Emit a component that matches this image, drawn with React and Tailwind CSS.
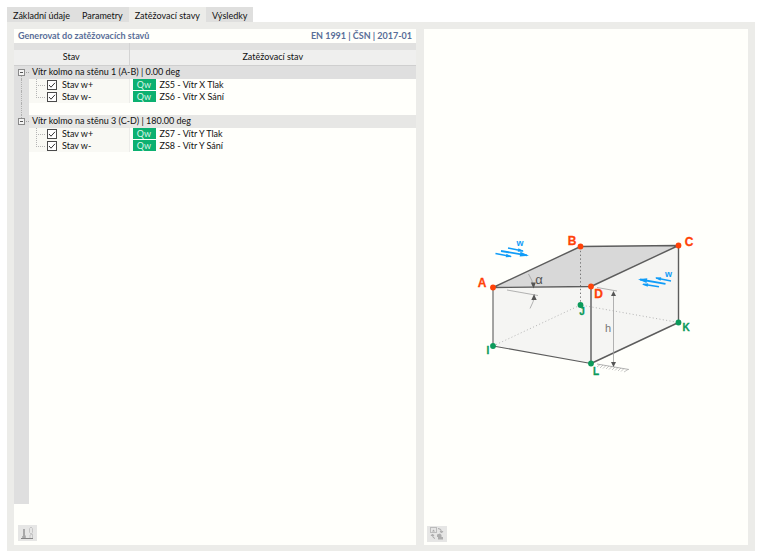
import React, { useState } from 'react';
import clsx from 'clsx';

const TABS = ['Základní údaje', 'Parametry', 'Zatěžovací stavy', 'Výsledky'];

const GROUPS = [
  {
    id: 'ab',
    title: 'Vítr kolmo na stěnu 1 (A-B) | 0.00 deg',
    rows: [
      { id: 'zs5', state: 'Stav w+', loadCase: 'ZS5 - Vítr X Tlak' },
      { id: 'zs6', state: 'Stav w-', loadCase: 'ZS6 - Vítr X Sání' },
    ],
  },
  {
    id: 'cd',
    title: 'Vítr kolmo na stěnu 3 (C-D) | 180.00 deg',
    rows: [
      { id: 'zs7', state: 'Stav w+', loadCase: 'ZS7 - Vítr Y Tlak' },
      { id: 'zs8', state: 'Stav w-', loadCase: 'ZS8 - Vítr Y Sání' },
    ],
  },
];

// --- Tabs ---
const TabBar = ({ active, onSelect }) => (
  <div role="tablist" className="flex h-[15px] items-stretch">
    {TABS.map((tab) => (
      <button
        key={tab}
        type="button"
        role="tab"
        aria-selected={tab === active}
        onClick={() => onSelect(tab)}
        className={clsx(
          'px-[6px] whitespace-nowrap leading-[17px]',
          tab === active ? 'bg-[#ecece9]' : 'bg-[#dfdfde]'
        )}
      >
        {tab}
      </button>
    ))}
  </div>
);

// --- Tree parts ---
const CheckBox = ({ id, checked, onChange }) => (
  <span className="relative block h-[10px] w-[10px]">
    <input
      id={id}
      type="checkbox"
      checked={checked}
      onChange={onChange}
      className="block h-[10px] w-[10px] appearance-none border border-[#4a4a4a] bg-white"
    />
    {checked && (
      <svg viewBox="0 0 10 10" className="pointer-events-none absolute inset-0 h-[10px] w-[10px]">
        <path d="M2 5 L4 7.2 L8 2.8" fill="none" stroke="#333" strokeWidth="1" />
      </svg>
    )}
  </span>
);

const Gutter = ({ line }) => (
  <td className="bg-[#dfdfdf] p-0">
    {line && <div className="ml-[7px] h-3 border-l border-dotted border-[#b0b0b0]" />}
  </td>
);

const LoadRow = ({ row, last, line, checked, onToggle }) => (
  <tr className="h-3">
    <Gutter line={line} />
    <td className="border-r border-[#ecece9] bg-[#f9f9f4] p-0">
      <div className="flex h-3 items-center">
        <svg viewBox="0 0 18 12" className="h-3 w-[18px]" fill="none" stroke="#b5b5b5" strokeDasharray="1 1">
          <path d={last ? 'M7.5 0V6.5' : 'M7.5 0V12'} />
          <path d="M7 6.5H17" />
        </svg>
        <CheckBox id={row.id} checked={checked} onChange={onToggle} />
        <label htmlFor={row.id} className="ml-[5px]">{row.state}</label>
      </div>
    </td>
    <td className="p-0">
      <div className="flex h-3 items-center pl-[3px]">
        <span className="flex h-[11px] w-[23px] items-center justify-center bg-[#0cb070] text-[#d9f5e8]">Qw</span>
        <span className="ml-1">{row.loadCase}</span>
      </div>
    </td>
  </tr>
);

const GroupHeader = ({ title, first, open, onToggle }) => (
  <tr className="h-[13px]">
    <td className="bg-[#dfdfdf] p-0">
      <button type="button" aria-label={title} aria-expanded={open} onClick={onToggle} className="ml-1 block h-[13px] w-[11px]">
        <svg viewBox="0 0 11 13" className="h-[13px] w-[11px]" fill="none">
          <path d={first ? 'M3.5 10V13' : 'M3.5 0V3'} stroke="#b0b0b0" strokeDasharray="1 1" />
          <rect x="0.5" y="3.5" width="6" height="6" fill="#f4f4f4" stroke="#8a8a8a" />
          <path d="M2 6.5H5" stroke="#555" />
          {!open && <path d="M3.5 5V8" stroke="#555" />}
          <path d="M8 6.5H11" stroke="#a5a5a5" strokeDasharray="1 1" />
        </svg>
      </button>
    </td>
    <td colSpan={2} className={clsx('p-0 pl-[3px]', first ? 'bg-[#dfdfdf]' : 'bg-[#e7e7e5]')}>{title}</td>
  </tr>
);

const LoadTable = () => {
  const [checked, setChecked] = useState({ zs5: true, zs6: true, zs7: true, zs8: true });
  const [open, setOpen] = useState({ ab: true, cd: true });

  return (
    <table className="w-full table-fixed border-collapse leading-3">
      <colgroup>
        <col className="w-[15px]" />
        <col className="w-[100px]" />
        <col />
      </colgroup>
      <thead>
        <tr className="h-[7px] bg-[#e1e1e0]">
          <td colSpan={2} className="border-r border-[#d3d3d3] p-0" />
          <td className="p-0" />
        </tr>
        <tr className="h-[15px] border-b border-[#cfcfcf] bg-[#efefee]">
          <th scope="col" colSpan={2} className="border-r border-[#d3d3d3] p-0 font-normal">Stav</th>
          <th scope="col" className="p-0 font-normal">Zatěžovací stav</th>
        </tr>
      </thead>
      <tbody>
        {GROUPS.map((group, i) => (
          <React.Fragment key={group.id}>
            <GroupHeader
              title={group.title}
              first={i === 0}
              open={open[group.id]}
              onToggle={() => setOpen({ ...open, [group.id]: !open[group.id] })}
            />
            {open[group.id] && group.rows.map((row, n) => (
              <LoadRow
                key={row.id}
                row={row}
                last={n === group.rows.length - 1}
                line={i < GROUPS.length - 1}
                checked={checked[row.id]}
                onToggle={() => setChecked({ ...checked, [row.id]: !checked[row.id] })}
              />
            ))}
            {i < GROUPS.length - 1 && (
              <tr className="h-3">
                <Gutter line />
                <td colSpan={2} className="p-0" />
              </tr>
            )}
          </React.Fragment>
        ))}
      </tbody>
    </table>
  );
};

// --- Building sketch ---
const TOP = [['A', 493, 287.5, 482, 287], ['B', 580.5, 246.5, 572, 245], ['C', 678.5, 245.5, 689, 246], ['D', 591, 286.5, 598.5, 298]];
const BASE = [['I', 493, 346, 488, 354], ['J', 580.5, 305, 582, 315], ['K', 678.5, 322.5, 686, 331], ['L', 591, 363.5, 596, 375]];

const Arrow = ({ x1, y1, x2, y2, bold }) => {
  const angle = (Math.atan2(y2 - y1, x2 - x1) * 180) / Math.PI;
  return (
    <g stroke="#109cf8" fill="#109cf8">
      <line x1={x1} y1={y1} x2={x2} y2={y2} strokeWidth={bold ? 1.8 : 1.5} />
      <path
        d={bold ? 'M2 0L-7 -2.4V2.4Z' : 'M1 0L-5 -1.8V1.8Z'}
        stroke="none"
        transform={`translate(${x2} ${y2}) rotate(${angle})`}
      />
    </g>
  );
};

const BuildingSketch = () => (
  <svg viewBox="471 227 230 160" className="h-[160px] w-[230px] font-['Liberation_Sans',sans-serif]" role="img" aria-label="h, α, w">
    <path d="M493 287.5L580.5 246.5L678.5 245.5V322.5L591 363.5L493 346Z" fill="#f5f5f3" />
    <path d="M493 287.5L580.5 246.5L678.5 245.5L591 286.5Z" fill="#d8d8d8" />
    <g fill="none" strokeDasharray="1 2.4">
      <path d="M580.5 247V305" stroke="#777" strokeDasharray="1.4 2.4" />
      <path d="M493 346L580.5 305L678.5 322.5" stroke="#b4b4b4" />
    </g>
    <g fill="none" stroke="#5c5c5c" strokeWidth="1.4" strokeLinejoin="round">
      <path d="M493 287.5L580.5 246.5L678.5 245.5L591 286.5Z" />
      <path d="M591 286.5V363.5L678.5 322.5V245.5" />
      <path d="M493 287.5V346L591 363.5" strokeWidth="1.1" />
    </g>
    {/* roof angle */}
    <g fill="none" stroke="#a0a0a0" strokeWidth="0.8">
      <path d="M507 290L538 295.5" />
      <path d="M528.5 274Q532.5 280 533.5 287" />
      <path d="M534.5 294Q534 302 530 308.5" />
    </g>
    <path d="M530.8 282.5H535.8L533.6 288.5Z M531.3 300H536.7L534 294.2Z" fill="#555" />
    <text x="539" y="284" textAnchor="middle" fontSize="13" fill="#555">α</text>
    {/* height */}
    <g fill="none" stroke="#a0a0a0" strokeWidth="0.8">
      <path d="M597 287.5L617 291" />
      <path d="M613.5 292V365" />
      <path d="M597 364L629 369.5" />
      <path
        d="M600 364.5L597 367M603 365L600 368M606 365.5L603 368.5M609 366L606 369M612 366.5L609 369.5M615 367L612 370M618 367.5L615 370.5M621 368L618 371M624 368.5L621 371.5M628 369.5L624 372"
        strokeWidth="0.6"
      />
    </g>
    <path d="M611 296H616L613.5 291Z M611 362H616L613.5 367Z" fill="#555" />
    <text x="608" y="332" textAnchor="middle" fontSize="11" fill="#777">h</text>
    {/* wind */}
    <Arrow x1={508} y1={248} x2={523} y2={251} />
    <Arrow x1={501} y1={251} x2={527} y2={255.3} bold />
    <Arrow x1={495.5} y1={253.5} x2={511} y2={256.5} />
    <Arrow x1={671} y1={281} x2={656} y2={278} />
    <Arrow x1={665.5} y1={283.8} x2={640} y2={279.5} bold />
    <Arrow x1={659} y1={286.7} x2={643} y2={284.3} />
    <g fill="#109cf8" fontSize="9" fontWeight="700" textAnchor="middle">
      <text x="520" y="246">w</text>
      <text x="668.5" y="277">w</text>
    </g>
    {TOP.map(([name, x, y, tx, ty]) => (
      <g key={name} fill="#ff4208">
        <circle cx={x} cy={y} r="2.9" />
        <text x={tx} y={ty} textAnchor="middle" fontSize="12" fontWeight="700" stroke="#ff4208" strokeWidth="0.3">{name}</text>
      </g>
    ))}
    {BASE.map(([name, x, y, tx, ty]) => (
      <g key={name} fill="#0b9a5a">
        <circle cx={x} cy={y} r="2.9" />
        <text x={tx} y={ty} textAnchor="middle" fontSize="10" fontWeight="700" stroke="#0b9a5a" strokeWidth="0.3">{name}</text>
      </g>
    ))}
  </svg>
);

// --- Page ---
export default function App() {
  const [tab, setTab] = useState('Zatěžovací stavy');

  return (
    <div className="flex min-h-screen flex-col bg-white pt-[7px] pr-[5px] pb-2 pl-[7px] font-['Lato','Open_Sans',sans-serif] text-[9px] text-[#111]">
      <TabBar active={tab} onSelect={setTab} />
      <main className="flex flex-1 gap-2 bg-[#ecece9] pt-[7px] pr-[7px] pb-[6px] pl-[7px]">
        <section className="flex flex-[402] flex-col bg-[#fffffb]">
          <header className="flex h-[14px] items-center justify-between px-1 font-bold leading-[14px] text-[#596e98]">
            <h1>Generovat do zatěžovacích stavů</h1>
            <span>EN 1991 | ČSN | 2017-01</span>
          </header>
          <LoadTable />
          <div className="w-[15px] flex-1 bg-[#dfdfdf]" />
          <footer className="flex h-[41px] items-end px-1 pb-1">
            <button type="button" aria-label="Import" className="flex h-4 w-[19px] items-center justify-center bg-[#e6e6e5]">
              <svg viewBox="0 0 19 16" className="h-4 w-[19px]" fill="none">
                <path d="M3 13.5H15" stroke="#858585" />
                <path d="M4.5 11V13M7.5 10.5V13" stroke="#b5b5b5" />
                <path d="M6 4V13" stroke="#a8a8a8" strokeWidth="2" />
                <path d="M11.5 3.5L13 2L14.5 3.5V7.5L13 9L11.5 7.5ZM12 10L14.5 9V13M12 10V13" stroke="#c6c6c6" />
              </svg>
            </button>
          </footer>
        </section>
        <section className="flex flex-[324] flex-col bg-[#fffffb]">
          <div className="flex flex-1 items-center justify-center pt-[60px]">
            <BuildingSketch />
          </div>
          <footer className="flex h-5 items-end px-[3px] pb-[3px]">
            <button type="button" aria-label="Export" className="flex h-4 w-5 items-center justify-center bg-[#e6e6e5]">
              <svg viewBox="0 0 20 16" className="h-4 w-5" fill="none">
                <rect x="3.5" y="1.5" width="6" height="5" stroke="#bcbcbc" />
                <path d="M5 5.5L6.5 3.5L8 5.5Z" fill="#a8a8a8" />
                <path d="M11 2.5Q14.5 2.5 14.5 6M13 5L14.5 7L16 5M8 12.5Q5.5 12 5.5 9M4 10L5.5 8L7 10" stroke="#a8a8a8" />
                <path d="M10 8.5L13 7.5L14.5 9V11H10ZM11 11H16V13.5H11Z" fill="#adadad" />
              </svg>
            </button>
          </footer>
        </section>
      </main>
    </div>
  );
}
